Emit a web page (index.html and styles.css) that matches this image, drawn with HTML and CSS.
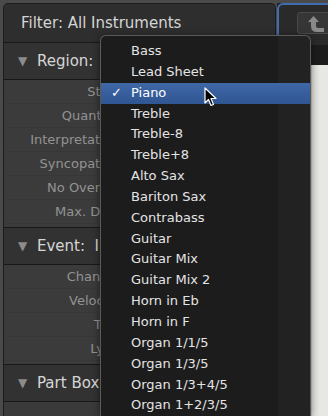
FILE: index.html
```html
<!DOCTYPE html>
<html lang="en">
<head>
    <meta charset="UTF-8">
    <title>Score Inspector</title>
    <link rel="stylesheet" href="styles.css">
</head>
<body>
    <div class="app">
        <div class="inspector">
            <div class="filter">Filter: All Instruments</div>

            <div class="section-head"><span class="tri">&#9660;</span>Region:</div>
            <div class="rows">
                <div class="row"><span class="label">Style</span></div>
                <div class="row"><span class="label">Quantize</span></div>
                <div class="row"><span class="label">Interpretation</span></div>
                <div class="row"><span class="label">Syncopation</span></div>
                <div class="row"><span class="label">No Overlap</span></div>
                <div class="row"><span class="label">Max. Dots</span></div>
            </div>

            <div class="section-head"><span class="tri">&#9660;</span>Event:&nbsp; I</div>
            <div class="rows">
                <div class="row"><span class="label">Channel</span></div>
                <div class="row"><span class="label">Velocity</span></div>
                <div class="row"><span class="label">Text</span></div>
                <div class="row"><span class="label">Lyric</span></div>
            </div>

            <div class="section-head"><span class="tri">&#9660;</span>Part Box</div>
            <div class="rows"></div>
        </div>

        <div class="editor">
            <div class="toolbar">
                <div class="tool-btn">
                    <svg width="18" height="18" viewBox="0 0 18 18">
                        <path d="M5.5 0 L11 6 L8 6 L8 10 Q8 12 10 12 L16 12 L16 16 L9 16 Q3 16 3 10 L3 6 L0 6 Z" fill="#8a8a8a"/>
                    </svg>
                </div>
            </div>
            <div class="texture"></div>
            <div class="score">
                <div class="gutter"></div>
                <div class="paper"></div>
            </div>
        </div>
    </div>

    <ul class="menu">
        <li>Bass</li>
        <li>Lead Sheet</li>
        <li class="selected"><span class="check">&#10003;</span>Piano</li>
        <li>Treble</li>
        <li>Treble-8</li>
        <li>Treble+8</li>
        <li>Alto Sax</li>
        <li>Bariton Sax</li>
        <li>Contrabass</li>
        <li>Guitar</li>
        <li>Guitar Mix</li>
        <li>Guitar Mix 2</li>
        <li>Horn in Eb</li>
        <li>Horn in F</li>
        <li>Organ 1/1/5</li>
        <li>Organ 1/3/5</li>
        <li>Organ 1/3+4/5</li>
        <li>Organ 1+2/3/5</li>
    </ul>

    <svg class="cursor" width="14" height="21" viewBox="0 0 14 21">
        <path d="M1 1 L1 16 L4.5 12.5 L7 18.5 L9.5 17.5 L7 11.5 L12 11.5 Z" fill="#000" stroke="#fff" stroke-width="1.2" stroke-linejoin="round"/>
    </svg>
</body>
</html>
```

FILE: styles.css
```css
body {
    margin: 0;
    width: 328px;
    height: 416px;
    overflow: hidden;
    background-color: #4a4a4a;
    font-family: 'DejaVu Sans', sans-serif;
    position: relative;
}
.app {
    display: flex;
    height: 413px;
    padding: 3px 0 0 3px;
    gap: 1px;
    overflow: hidden;
}
.inspector {
    width: 271px;
    border: 1px solid #1c1c1c;
    border-bottom: none;
    border-radius: 5px 5px 0 0;
    background-color: #3a3a3a;
    overflow: hidden;
}
.filter {
    height: 38px;
    line-height: 38px;
    padding-left: 17px;
    font-size: 15px;
    color: #d4d4d4;
    background-color: #2e2e2e;
    white-space: nowrap;
}
.section-head {
    height: 36px;
    line-height: 36px;
    padding-left: 14px;
    font-size: 15px;
    color: #d6d6d6;
    background-color: #323232;
    border-top: 1px solid #181818;
    border-bottom: 1px solid #181818;
    white-space: nowrap;
}
.tri {
    display: inline-block;
    width: 19px;
    font-size: 12px;
    color: #8c8c8c;
    vertical-align: 1px;
}
.rows {
    padding: 0 0 3px;
    background-color: #3b3b3b;
}
/* labels run on under the popup menu, so clip them where it starts */
.row {
    width: 96px;
    height: 24px;
    line-height: 24px;
    overflow: hidden;
    border-bottom: 1px solid #373737;
    box-sizing: border-box;
}
.label {
    display: block;
    width: 116px;
    text-align: right;
    font-size: 13px;
    color: #939393;
    white-space: nowrap;
}
.editor {
    flex: 1;
    display: flex;
    flex-direction: column;
    background-color: #1f1f1f;
}
.toolbar {
    height: 33px;
    border: 2px solid #3f6db0;
    border-right: none;
    border-bottom: none;
    border-radius: 6px 0 0 0;
    background-color: #2a2a2a;
    padding: 7px 0 0 18px;
}
.tool-btn {
    height: 22px;
    border: 1px solid #4a4a4a;
    border-right: none;
    border-radius: 4px 0 0 4px;
    background-color: #363636;
    padding: 3px 0 0 10px;
    box-sizing: border-box;
}
.texture {
    height: 20px;
    background-color: #1c1c1c;
}
.score {
    flex: 1;
    display: flex;
}
.gutter {
    width: 34px;
    background-color: #242424;
}
.paper {
    flex: 1;
    background-color: #e7e7e3;
    border-left: 1px solid #cfcfcb;
}
.menu {
    position: absolute;
    left: 100px;
    top: 35px;
    width: 209px;
    height: 375px;
    margin: 0;
    padding: 5px 0 0;
    overflow: hidden;
    list-style: none;
    background: linear-gradient(to right, #1c1c1c 0, #1c1c1c 176px, #222 178px);
    border: 1px solid #5a5a5a;
    border-bottom: none;
    border-radius: 6px 6px 0 0;
    box-shadow: 0 2px 8px rgba(0, 0, 0, 0.5);
}
.menu li {
    height: 20.85px;
    line-height: 20.85px;
    padding-left: 30px;
    position: relative;
    font-size: 13px;
    color: #e4e4e4;
    white-space: nowrap;
}
.menu li.selected {
    background: linear-gradient(#4068a6, #2f5592);
    color: #fff;
}
.check {
    position: absolute;
    left: 10px;
    top: 0;
}
.cursor {
    position: absolute;
    left: 204px;
    top: 87px;
}
```
